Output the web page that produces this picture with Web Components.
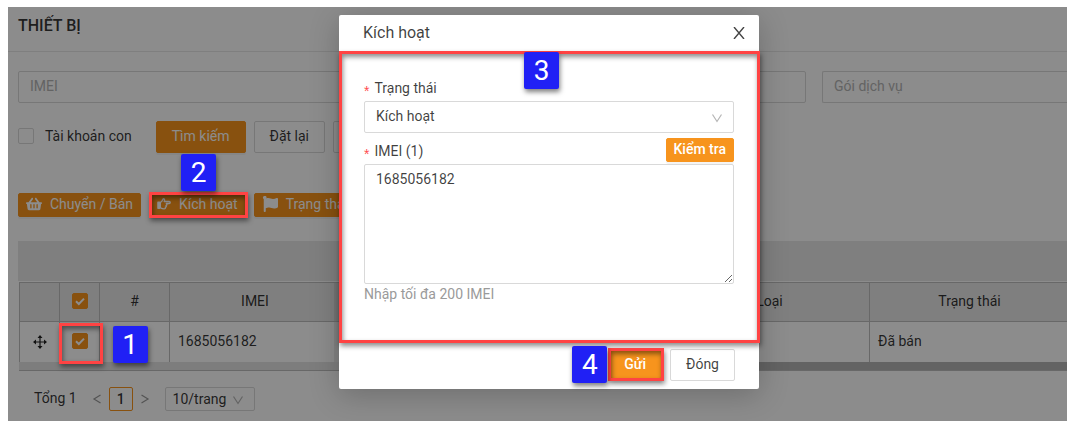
<!DOCTYPE html>
<html lang="vi">
<head>
<meta charset="utf-8">
<meta name="viewport" content="width=device-width, initial-scale=1">
<title>Thiết bị</title>
<style>
html{background:#fff}
body{margin:0;padding:7px 9px 8px 8px;font:14px/22px Roboto,"Liberation Sans",sans-serif;color:rgba(0,0,0,.8)}
</style>
</head>
<body>
<device-page></device-page>
<script>
const define = (name, html, setup) => {
  const template = document.createElement('template');
  template.innerHTML = '<style>*,*::before,*::after{box-sizing:border-box}:host{box-sizing:border-box}</style>' + html;
  customElements.define(name, class extends HTMLElement {
    constructor() {
      super();
      this.attachShadow({mode: 'open'}).append(template.content.cloneNode(true));
    }
    connectedCallback() { if (setup) setup(this, this.shadowRoot); }
  });
};

/* Numbered step: a red frame round the slotted target and a blue badge beside it */
define('step-mark', `
<style>
:host{display:block;position:relative}
.frame{position:absolute;inset:var(--frame,0);border:3px solid #ff4343;z-index:5;pointer-events:none;
 box-shadow:1px 3px 5px rgba(0,0,0,.45),inset 1px 3px 5px rgba(0,0,0,.45)}
.badge{position:absolute;left:var(--bx,0);top:var(--by,0);width:35px;height:37px;border-radius:2px;background:#2020f5;color:#fff;
 font-size:28px;line-height:37px;text-align:center;z-index:6;box-shadow:1px 3px 5px rgba(0,0,0,.5)}
</style>
<slot></slot><span class="frame"></span><span class="badge"></span>`,
(host, root) => { root.querySelector('.badge').textContent = host.getAttribute('number'); });

define('app-button', `
<style>
:host{display:block}
button{display:flex;align-items:center;justify-content:center;gap:8px;width:100%;height:32px;padding:0 15px 2px;font:inherit;color:inherit;
 background:#fff;border:1px solid #d9d9d9;border-radius:2px;white-space:nowrap}
:host([primary]) button{background:#f7941d;border-color:#f7941d;color:#fff;box-shadow:0 2px 0 rgba(0,0,0,.045)}
:host([small]) button{height:24px;padding:0 7px 2px}
:host([strong]) button{font-weight:500}
::slotted(svg){width:var(--icon,16px);height:16px;flex:none;fill:currentColor}
</style>
<button type="button"><slot name="icon"></slot><slot></slot></button>`,
(host, root) => { if (host.title) root.querySelector('button').setAttribute('aria-label', host.title); });

define('check-box', `
<style>
:host{display:inline-block;line-height:22px}
label{display:flex;align-items:center;gap:11px}
input{appearance:none;margin:0;width:16px;height:16px;flex:none;border:1px solid #d9d9d9;border-radius:2px;background:#fff}
input:checked{border-color:#f7941d;background:#f7941d url("data:image/svg+xml,%3Csvg xmlns='http://www.w3.org/2000/svg' viewBox='0 0 14 14'%3E%3Cpath d='M3 7.2l2.8 2.8L11 4.6' fill='none' stroke='white' stroke-width='2'/%3E%3C/svg%3E") center/14px}
</style>
<label><input type="checkbox"><slot></slot></label>`,
(host, root) => {
  const input = root.querySelector('input');
  input.checked = host.hasAttribute('checked');
  if (host.title) input.setAttribute('aria-label', host.title);
});

define('filter-input', `
<style>
:host{display:block;min-width:0}
input{display:block;width:100%;height:32px;padding:0 11px 2px;font:inherit;border:1px solid #d9d9d9;border-radius:2px;background:#fff}
:host([bleed]) input{border-right:0;border-radius:2px 0 0 2px}
input::placeholder{color:#b5b5b5;opacity:1}
</style>
<input type="text">`,
(host, root) => {
  const input = root.querySelector('input');
  input.placeholder = host.getAttribute('label');
  input.setAttribute('aria-label', host.getAttribute('label'));
});

define('drop-down', `
<style>
:host{display:block;position:relative}
select{display:block;appearance:none;width:100%;height:32px;padding:0 30px 2px 11px;font:inherit;color:inherit;border:1px solid #d9d9d9;border-radius:2px;background:#fff}
svg{position:absolute;right:11px;top:50%;margin-top:-5px;width:12px;height:12px;fill:none;stroke:#b5b5b5;stroke-width:1.2;pointer-events:none}
:host([small]) select{height:24px;padding:0 27px 2px 7px}
</style>
<select></select><svg viewBox="0 0 12 12"><path d="M1.500 2.500L6 9.500l4.500-7"/></svg>`,
(host, root) => {
  const select = root.querySelector('select');
  select.append(new Option(host.getAttribute('value')));
  select.setAttribute('aria-label', host.getAttribute('label'));
});

define('device-table', `
<style>
:host{display:block;padding:41px 0 0 1px;margin-right:-2px;background:linear-gradient(#e8e8e8,#e8e8e8) 0 0/100% 40px no-repeat}
table{width:100%;table-layout:fixed;border-collapse:separate;border-spacing:0;background:#fff}
th,td{border:solid #bdbdbd;border-width:1px 0 0 1px;padding:0 8px 2px;font-weight:400;text-align:left}
th{height:39px;background:#e8e8e8;text-align:center}
td{height:41px}
th:nth-child(4),td:nth-child(4){box-shadow:inset -6px 0 rgba(0,0,0,.07)}
.mid{text-align:center;padding:0 0 2px}
.move{vertical-align:middle;display:inline-block;width:14px;height:14px}
check-box{height:16px;line-height:0;display:block;width:16px;margin:0 auto}
step-mark{--frame:-10px -15px -15px -13px;--bx:41px;--by:-7px;width:16px;margin:0 auto}
.c40{width:40px}.c70{width:70px}.c171{width:171px}.c200{width:200px}
.track{display:flex;height:9px;border-bottom:1px solid #bdbdbd}
.fixed{width:320px;background:#e4e4e4}
.thumb{flex:1;background:#b5b5b5}
</style>
<table>
<colgroup><col class="c40"><col class="c40"><col class="c70"><col class="c171"><col><col class="c200"><col class="c200"></colgroup>
<thead><tr><th></th><th class="mid"><check-box checked title="Chọn tất cả"></check-box></th><th>#</th><th>IMEI</th><th></th><th>Loại</th><th>Trạng thái</th></tr></thead>
<tbody><tr>
<td class="mid"><svg class="move" viewBox="0 0 14 14" fill="none" stroke="#222" stroke-width="1.2"><path d="M7 1v12M1 7h12"/><path fill="#222" stroke="none" d="M7 0l2.500 3h-5zM7 14l2.500-3h-5zM0 7l3-2.500v5zM14 7l-3-2.500v5z"/></svg></td>
<td class="mid"><step-mark number="1"><check-box checked title="Chọn 1685056182"></check-box></step-mark></td>
<td></td><td>1685056182</td><td></td><td></td><td>Đã bán</td>
</tr></tbody>
</table>
<div class="track"><div class="fixed"></div><div class="thumb"></div></div>`);

define('page-nav', `
<style>
:host{display:flex;align-items:center;height:24px;padding-left:16px}
button{font:inherit;color:inherit;padding:0;background:none;border:0;width:24px;height:24px;display:grid;place-items:center}
button svg{width:10px;height:12px;fill:none;stroke:#999;stroke-width:1.2}
.now{border:1px solid #f7941d;border-radius:2px;background:#fff;font-weight:500}
.total{margin-right:8px;padding-bottom:2px}
drop-down{width:90px;margin-left:8px}
</style>
<span class="total">Tổng 1</span>
<button aria-label="Trang trước"><svg viewBox="0 0 10 12"><path d="M8.500 2L2 6l6.500 4"/></svg></button>
<button class="now">1</button>
<button aria-label="Trang sau"><svg viewBox="0 0 10 12"><path d="M1.500 2L8 6l-6.500 4"/></svg></button>
<drop-down small value="10/trang" label="Số dòng mỗi trang"></drop-down>`);

define('activate-dialog', `
<style>
:host{display:block;width:420px;height:max-content;background:#fff;border-radius:2px;box-shadow:0 6px 30px rgba(0,0,0,.22);color:rgba(0,0,0,.75)}
header{display:flex;align-items:center;justify-content:space-between;height:36px;padding:0 14px 0 24px}
h2{margin:0;font-size:16px;font-weight:400;line-height:24px}
.close{width:12px;height:12px;padding:0;border:0;background:none}
.close svg{display:block;width:12px;height:12px;fill:none;stroke:#444;stroke-width:1.4}
step-mark{--frame:0 -1px -2px 0;--bx:185px;--by:1px}
.body{padding:24px 25px 36px}
.row{display:flex;justify-content:space-between;height:26px}
label{line-height:26px}
.req::before{content:"*";color:#ff4d4f;font:14px/20px "Liberation Sans",sans-serif;margin-right:5px;vertical-align:-3px}
.row + drop-down{margin-bottom:5px}
textarea{display:block;width:100%;height:120px;padding:3px 11px;font:inherit;color:inherit;border:1px solid #d9d9d9;border-radius:2px;resize:vertical}
p{margin:0;height:21px;line-height:20px;color:#9a9a9a}
footer{display:flex;justify-content:flex-end;gap:8px;padding:8px 24px}
footer step-mark{--frame:-1px -2px 0 0;--bx:-36px;--by:-3px}
</style>
<header><h2>Kích hoạt</h2><button class="close" aria-label="Đóng hộp thoại"><svg viewBox="0 0 12 12"><path d="M1 0l10 12M11 0L1 12"/></svg></button></header>
<step-mark number="3"><div class="body">
<div class="row"><label class="req">Trạng thái</label></div>
<drop-down value="Kích hoạt" label="Trạng thái"></drop-down>
<div class="row"><label class="req" for="imei">IMEI (1)</label><app-button primary small strong>Kiểm tra</app-button></div>
<textarea id="imei">1685056182</textarea>
<p>Nhập tối đa 200 IMEI</p>
</div></step-mark>
<footer><step-mark number="4"><app-button primary strong>Gửi</app-button></step-mark><app-button>Đóng</app-button></footer>`);

define('device-page', `
<style>
:host{display:block;position:relative;overflow:hidden;background:#fff}
h1{margin:0;padding:0 10px 6px;height:45px;line-height:38px;font-size:16px;font-weight:500;border-bottom:1px solid #e8e8e8}
main{padding:19px 0 10px 10px}
.filters{display:grid;grid-template-columns:386fr 386fr 245fr;gap:16px}
.tools{display:flex;align-items:center;gap:8px;margin-top:18px}
.tools check-box{margin-right:16px;padding-bottom:2px}
.more{width:80px}
.actions{display:flex;gap:8px;margin:40px 0 24px}
.actions step-mark{--frame:-1px -2px -1px 0;--bx:32px;--by:-39px;--icon:14px}
page-nav{margin-top:16px}
.mask{position:absolute;inset:0;z-index:2;background:rgba(0,0,0,.45)}
.layer{position:absolute;inset:0;z-index:4;display:flex;justify-content:center;padding:8px 0 0 23px}
</style>
<h1>THIẾT BỊ</h1>
<main>
<div class="filters"><filter-input label="IMEI"></filter-input><filter-input label="Loại"></filter-input><filter-input bleed label="Gói dịch vụ"></filter-input></div>
<div class="tools"><check-box>Tài khoản con</check-box><app-button primary>Tìm kiếm</app-button><app-button>Đặt lại</app-button><app-button class="more" title="Thêm"></app-button></div>
<div class="actions">
<app-button primary small><svg slot="icon" viewBox="0 0 576 512"><path d="M576 216v16c0 13.300-10.700 24-24 24h-8l-26.100 182.800C514.600 462.400 494.300 480 470.400 480H105.600c-23.900 0-44.200-17.600-47.500-41.200L32 256h-8c-13.300 0-24-10.700-24-24v-16c0-13.300 10.700-24 24-24h67.300l106.800-146.800c10.400-14.300 30.400-17.500 44.700-7.100 14.300 10.400 17.500 30.400 7.100 44.700L170.500 192h235l-79.400-109.200c-10.400-14.300-7.200-34.300 7.100-44.700 14.300-10.400 34.300-7.200 44.700 7.100L484.700 192H552c13.300 0 24 10.700 24 24zM312 392V280c0-13.300-10.700-24-24-24s-24 10.700-24 24v112c0 13.300 10.700 24 24 24s24-10.700 24-24zm112 0V280c0-13.300-10.700-24-24-24s-24 10.700-24 24v112c0 13.300 10.700 24 24 24s24-10.700 24-24zm-224 0V280c0-13.300-10.700-24-24-24s-24 10.700-24 24v112c0 13.300 10.700 24 24 24s24-10.700 24-24z"/></svg>Chuyển / Bán</app-button>
<step-mark number="2"><app-button primary small><svg slot="icon" viewBox="0 0 15 14" style="fill:none;stroke:currentColor;stroke-width:1.500;stroke-linejoin:round"><path d="M3.500 5.300C5 5 5.900 3.200 6.500 1.500c1.500-.3 2.100 1 1.200 2.800h5.300c1.500 0 1.500 2.100 0 2.100h-3c1 .8.700 1.900-.3 2.100.6.900.2 1.700-.7 1.900.3 1-.2 1.800-1.500 1.800-1.800 0-2.800-.6-4-1.200z"/><path fill="currentColor" d="M1 5h1.700v6.500H1z"/></svg>Kích hoạt</app-button></step-mark>
<app-button primary small><svg slot="icon" viewBox="0 0 512 512"><path d="M350 99c-49 0-89-32-151-32-23 0-43 4-62 11A56 56 0 1 0 56 97v391c0 13 11 24 24 24h16c13 0 24-11 24-24v-94c28-12 64-23 115-23 49 0 89 32 151 32 45 0 81-15 115-37 7-5 11-13 11-21V96c0-23-24-39-45-29-35 16-77 32-117 32z"/></svg>Trạng thái</app-button>
</div>
<device-table></device-table>
<page-nav></page-nav>
</main>
<div class="mask"></div>
<div class="layer"><activate-dialog role="dialog" aria-label="Kích hoạt"></activate-dialog></div>`);
</script>
</body>
</html>
